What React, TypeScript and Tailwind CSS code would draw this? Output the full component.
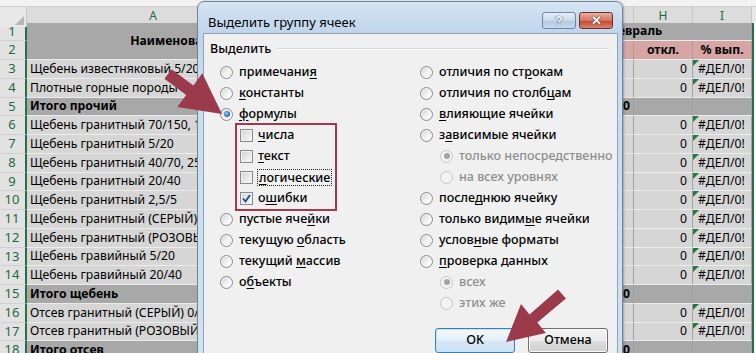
import { Fragment } from "react";
import type { ReactNode } from "react";

type SheetRow = { n: number; name: string; total?: boolean };

const sheetRows: SheetRow[] = [
  { n: 3, name: "Щебень известняковый 5/20, 10/20" },
  { n: 4, name: "Плотные горные породы" },
  { n: 5, name: "Итого прочий", total: true },
  { n: 6, name: "Щебень гранитный 70/150, 150/300" },
  { n: 7, name: "Щебень гранитный 5/20" },
  { n: 8, name: "Щебень гранитный 40/70, 25/60" },
  { n: 9, name: "Щебень гранитный 20/40" },
  { n: 10, name: "Щебень гранитный 2,5/5" },
  { n: 11, name: "Щебень гранитный (СЕРЫЙ) 0/5" },
  { n: 12, name: "Щебень гранитный (РОЗОВЫЙ) 0/5" },
  { n: 13, name: "Щебень гравийный 5/20" },
  { n: 14, name: "Щебень гравийный 20/40" },
  { n: 15, name: "Итого щебень", total: true },
  { n: 16, name: "Отсев гранитный (СЕРЫЙ) 0/5" },
  { n: 17, name: "Отсев гранитный (РОЗОВЫЙ) 0/5" },
  { n: 18, name: "Итого отсев", total: true },
];

const cell = "flex items-center overflow-hidden whitespace-nowrap border-b border-r border-b-[#ececec] border-r-[#a2a2a2]";
const light = "bg-[#d6d6d6]";
const dark = "bg-[#a8a8a8]";
const pink = "bg-[#d6a5a4]";

function RowNum({ n }: { n: number }) {
  return (
    <div className="flex items-center justify-center border-b border-r-2 border-b-[#d0d0d0] border-r-[#217346] bg-[#e2e2e2] pr-[1px] text-[13px] text-[#1d6b40]">
      {n}
    </div>
  );
}

function Sheet() {
  return (
    <div className="font-['Noto_Sans',sans-serif] text-[12.2px] text-black">
      <div className="h-[7px] border-b border-[#d0d0d0] bg-[#f2f2f2]" />
      <div className="grid h-[15.6px] grid-cols-[27px_253px_307px_47px_59px_59px_4px] text-[12px] text-[#1d6b40]">
        <div className="relative border-r border-[#c8c8c8] bg-[#e8e8e8]">
          <span className="absolute bottom-[2px] right-[2px] h-0 w-0 border-b-[9px] border-l-[9px] border-b-[#b5b5b5] border-l-transparent" />
        </div>
        <div className="flex items-center justify-center border-b-2 border-r border-b-[#217346] border-r-[#c8c8c8] bg-[#dcdcdc]">A</div>
        <div className="border-b-2 border-r border-b-[#217346] border-r-[#c8c8c8] bg-[#dcdcdc]" />
        <div className="flex items-center justify-center border-b-2 border-r border-b-[#217346] border-r-[#c8c8c8] bg-[#dcdcdc]">G</div>
        <div className="flex items-center justify-center border-b-2 border-r border-b-[#217346] border-r-[#c8c8c8] bg-[#dcdcdc]">H</div>
        <div className="flex items-center justify-center border-b-2 border-r border-b-[#217346] border-r-[#c8c8c8] bg-[#dcdcdc]">I</div>
        <div className="bg-[#e8e8e8]" />
      </div>
      <div className="grid auto-rows-[18.75px] grid-cols-[27px_253px_307px_47px_59px_59px_4px]">
        <RowNum n={1} />
        <div className={`${cell} ${dark} row-span-2 justify-center pl-[50px] font-bold`}>Наименование</div>
        <div className={`${cell} ${dark} col-span-4 pl-[327px] font-bold`}>Февраль</div>
        <div className="border-l-2 border-[#217346] bg-white" />

        <RowNum n={2} />
        <div className={`${cell} ${dark}`} />
        <div className={`${cell} ${pink}`} />
        <div className={`${cell} ${pink} justify-center font-bold`}>откл.</div>
        <div className={`${cell} ${pink} justify-center font-bold`}>% вып.</div>
        <div className="border-l-2 border-[#217346] bg-white" />

        {sheetRows.map((r) =>
          r.total ? (
            <Fragment key={r.n}>
              <RowNum n={r.n} />
              <div className={`${cell} ${dark} pl-[3px] font-bold`}>{r.name}</div>
              <div className={`${cell} ${dark}`} />
              <div className={`${cell} ${dark} justify-end pr-[3px] font-bold`}>0</div>
              <div className={`${cell} ${dark}`} />
              <div className={`${cell} ${dark}`} />
              <div className="border-l-2 border-[#217346] bg-white" />
            </Fragment>
          ) : (
            <Fragment key={r.n}>
              <RowNum n={r.n} />
              <div className={`${cell} ${light} pl-[3px]`}>{r.name}</div>
              <div className={`${cell} ${light}`} />
              <div className={`${cell} ${light}`} />
              <div className={`${cell} ${light} justify-end pr-[5px]`}>0</div>
              <div className={`${cell} ${light} relative pl-[5px]`}>
                <span className="absolute left-0 top-0 h-0 w-0 border-l-[6px] border-t-[6px] border-l-transparent border-t-[#1f7a3c] [transform:scaleX(-1)]" />
                #ДЕЛ/0!
              </div>
              <div className="border-l-2 border-[#217346] bg-white" />
            </Fragment>
          )
        )}
      </div>
    </div>
  );
}

function Radio({ checked, disabled }: { checked?: boolean; disabled?: boolean }) {
  return (
    <span
      className={`flex h-[13px] w-[13px] shrink-0 items-center justify-center rounded-full border ${
        disabled
          ? "border-[#c6c6c6] bg-[#f3f3f3]"
          : "border-[#8a8a8a] bg-[linear-gradient(135deg,#cfcfcf,#f6f6f6_60%,#ffffff)] shadow-[inset_0_0_0_1px_#f4f4f4]"
      }`}
    >
      {checked && (
        <span
          className={`h-[6px] w-[6px] rounded-full ${
            disabled ? "bg-[#a3a3a3]" : "bg-[radial-gradient(circle_at_40%_40%,#8fd0ff,#1d5fae_70%)]"
          }`}
        />
      )}
    </span>
  );
}

function Check({ checked }: { checked?: boolean }) {
  return (
    <span className="flex h-[13px] w-[13px] shrink-0 items-center justify-center border border-[#8a8a8a] bg-[linear-gradient(135deg,#d2d2d2,#fbfbfb)] shadow-[inset_0_0_0_1px_#f2f2f2]">
      {checked && (
        <svg width="9" height="9" viewBox="0 0 9 9">
          <path d="M1 4.5 L3.5 7.5 L8 1" fill="none" stroke="#1c4d8f" strokeWidth="1.8" />
        </svg>
      )}
    </span>
  );
}

type Opt = { label: ReactNode; checked?: boolean; disabled?: boolean; indent?: boolean };

function OptionRow({ label, checked, disabled, indent }: Opt) {
  return (
    <div className={`flex h-[21px] items-center gap-[6px] ${indent ? "pl-[20px]" : ""}`}>
      <Radio checked={checked} disabled={disabled} />
      <span className={disabled ? "text-[#8e8e8e]" : ""}>{label}</span>
    </div>
  );
}

const u = "underline underline-offset-[2px]";

const leftTop: Opt[] = [
  { label: <>примечани<span className={u}>я</span></> },
  { label: <><span className={u}>к</span>онстанты</> },
  { label: <><span className={u}>ф</span>ормулы</>, checked: true },
];

const leftBottom: Opt[] = [
  { label: <>пустые яче<span className={u}>й</span>ки</> },
  { label: <>текущую <span className={u}>о</span>бласть</> },
  { label: <>текущий <span className={u}>м</span>ассив</> },
  { label: <>о<span className={u}>б</span>ъекты</> },
];

const right: Opt[] = [
  { label: <>отличия по ст<span className={u}>р</span>окам</> },
  { label: <>отличия по столб<span className={u}>ц</span>ам</> },
  { label: <><span className={u}>в</span>лияющие ячейки</> },
  { label: <>з<span className={u}>а</span>висимые ячейки</> },
  { label: "только непосредственно", disabled: true, checked: true, indent: true },
  { label: "на всех уровнях", disabled: true, indent: true },
  { label: <>после<span className={u}>д</span>нюю ячейку</> },
  { label: <>только видим<span className={u}>ы</span>е ячейки</> },
  { label: <>услов<span className={u}>н</span>ые форматы</> },
  { label: <><span className={u}>п</span>роверка данных</> },
  { label: "всех", disabled: true, checked: true, indent: true },
  { label: "этих же", disabled: true, indent: true },
];

function Dialog() {
  return (
    <div className="absolute left-[197px] top-[1px] h-[372px] w-[426px] rounded-t-[7px] border border-[#70849b] bg-[linear-gradient(180deg,#d6e4f3_0px,#bfd4eb_32px,#cadcef_80px,#d0e1f2_100%)] shadow-[1px_0_2px_rgba(0,0,0,0.25)]">
      <div className="flex h-[31px] justify-between pl-[10px] pr-[9px]">
        <span className="pt-[12px] font-['Noto_Sans',sans-serif] text-[13px] leading-[16px] text-black">Выделить группу ячеек</span>
        <div className="mt-[10px] flex h-[17px] gap-[3px]">
          <div className="flex w-[34px] items-center justify-center rounded-[3px] border border-[#6f87a3] bg-[linear-gradient(180deg,#e6eef7,#c9d9ea_50%,#b3c9e1_51%,#c8daee)] font-['Liberation_Sans',sans-serif] text-[13px] font-bold leading-none text-white [text-shadow:0_0_1px_#2d3e52,0_0_1px_#2d3e52]">
            ?
          </div>
          <div className="flex w-[34px] items-center justify-center rounded-[3px] border border-[#6b3328] bg-[linear-gradient(180deg,#eab0a2,#d5735e_50%,#c3462c_51%,#d8836e)] font-['Liberation_Sans',sans-serif] text-[13px] font-bold leading-none text-white [text-shadow:0_0_1px_#4a1a10,0_0_1px_#4a1a10]">
            ✕
          </div>
        </div>
      </div>
      <div className="ml-[5px] mr-[4px] h-[340px] border border-[#8ea3bb] bg-[#f0f0f0] font-['Noto_Sans',sans-serif] text-[12.5px] font-medium text-black">
        <div className="mt-[7px] flex h-[16px] items-center pl-[6px] pr-[7px]">
          <span>Выделить</span>
          <span className="ml-[6px] h-[2px] flex-1 border-b border-t border-b-white border-t-[#d3dce3]" />
        </div>
        <div className="mt-[4.5px] flex">
          <div className="w-[216px] shrink-0 pl-[16px]">
            {leftTop.map((o, i) => (
              <OptionRow key={i} {...o} />
            ))}
            <div className="-my-[2px] ml-[15px] w-[102px] border-2 border-[#a3394a] pl-[3px]">
              <div className="flex h-[21px] items-center gap-[5px]">
                <Check />
                <span><span className={u}>ч</span>исла</span>
              </div>
              <div className="flex h-[21px] items-center gap-[5px]">
                <Check />
                <span><span className={u}>т</span>екст</span>
              </div>
              <div className="flex h-[21px] items-center gap-[4px]">
                <Check />
                <span className="border border-dotted border-[#222] px-[1px] leading-[15px]"><span className={u}>л</span>огические</span>
              </div>
              <div className="flex h-[21px] items-center gap-[5px]">
                <Check checked />
                <span>о<span className={u}>ш</span>ибки</span>
              </div>
            </div>
            {leftBottom.map((o, i) => (
              <OptionRow key={i} {...o} />
            ))}
          </div>
          <div>
            {right.map((o, i) => (
              <OptionRow key={i} {...o} />
            ))}
          </div>
        </div>
        <div className="mt-[14.5px] flex justify-end gap-[13px] pr-[9px]">
          <div className="flex h-[25px] w-[80px] items-center justify-center rounded-[3px] border border-[#3c7fb1] bg-[linear-gradient(180deg,#f4f9fd,#e3eff8_50%,#d3e6f4_51%,#cfe4f3)] shadow-[inset_0_0_0_1px_#c6e2f6]">
            OK
          </div>
          <div className="flex h-[25px] w-[80px] items-center justify-center rounded-[3px] border border-[#707070] bg-[linear-gradient(180deg,#f2f2f2,#ebebeb_50%,#dddddd_51%,#cfcfcf)] shadow-[inset_0_0_0_1px_#fafafa]">
            Отмена
          </div>
        </div>
      </div>
    </div>
  );
}

function Arrows() {
  return (
    <svg className="pointer-events-none absolute left-0 top-0" width="756" height="353" viewBox="0 0 756 353">
      <polygon
        points="171.6,69.2 193.4,85.4 202.3,73.3 222,114 177.3,107.1 186.2,95 164.4,78.8"
        fill="#9b3a4b"
      />
      <polygon
        points="558.1,289.5 529.5,314.6 521,304.1 506,342 545.8,332.9 537.3,322.4 565.9,298.5"
        fill="#9b3a4b"
      />
    </svg>
  );
}

export default function App() {
  return (
    <div className="relative h-[353px] w-[756px] overflow-hidden bg-white">
      <Sheet />
      <Dialog />
      <Arrows />
    </div>
  );
}
